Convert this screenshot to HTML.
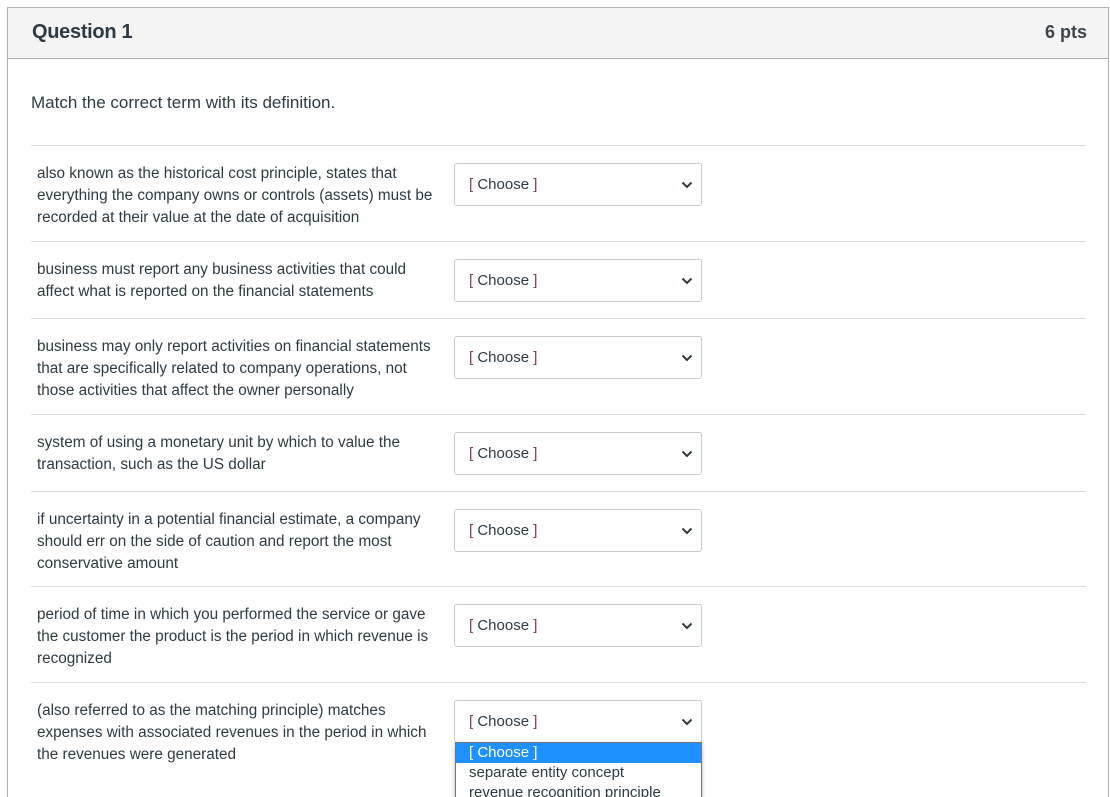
<!DOCTYPE html>
<html style="overflow:hidden;height:797px"><head><style>
body{margin:0;width:1110px;height:797px;overflow:hidden;background:#fff;font-family:"Liberation Sans",sans-serif;color:#2d3b45;position:relative}
.box{position:absolute;left:7px;top:7px;width:1100px;height:820px;border:1px solid #b0b0b0}
.hdr{position:absolute;left:0;top:0;right:0;height:50px;background:#f4f4f4;border-bottom:1px solid #b0b0b0}
.q{position:absolute;left:24px;top:13px;font-size:20px;font-weight:bold;letter-spacing:-0.3px}
.pts{position:absolute;right:21px;top:14px;font-size:18px;font-weight:bold;color:#3d464d}
.ins{position:absolute;left:31px;top:93px;font-size:17px}
.sep{position:absolute;left:31px;width:1055px;height:1px;background:#dcdcdc}
.t{position:absolute;left:37px;font-size:15.3px;line-height:22px;white-space:nowrap;margin-top:1px}
.sel{position:absolute;left:454px;width:248px;height:43px;border:1px solid #c7cdd1;border-radius:3px;background:#fff;box-sizing:border-box}
.sel>.c{position:absolute;left:14px;top:12px;font-size:15px;color:#2d3b45}
.b{color:#7a3a5a}
.sel svg{position:absolute;right:8px;top:17px}
.dd{position:absolute;left:455px;top:742px;width:245px;height:60px;border:1px solid #777;background:#fff;box-shadow:0 2px 4px rgba(0,0,0,.3);font-size:15px;color:#2d3b45}
.dd div{height:20px;line-height:19px;padding-left:13px}
.dd .h{background:#1e90ff;color:#fff}
</style></head><body>
<div class="box"><div class="hdr"><div class="q">Question 1</div><div class="pts">6 pts</div></div></div>
<div class="ins">Match the correct term with its definition.</div>
<div class="sep" style="top:145px"></div>
<div class="sep" style="top:241px"></div>
<div class="sep" style="top:318px"></div>
<div class="sep" style="top:414px"></div>
<div class="sep" style="top:491px"></div>
<div class="sep" style="top:586px"></div>
<div class="sep" style="top:682px"></div>

<div class="t" style="top:162px">also known as the historical cost principle, states that<br>everything the company owns or controls (assets) must be<br>recorded at their value at the date of acquisition</div>
<div class="t" style="top:258px">business must report any business activities that could<br>affect what is reported on the financial statements</div>
<div class="t" style="top:335px">business may only report activities on financial statements<br>that are specifically related to company operations, not<br>those activities that affect the owner personally</div>
<div class="t" style="top:431px">system of using a monetary unit by which to value the<br>transaction, such as the US dollar</div>
<div class="t" style="top:508px">if uncertainty in a potential financial estimate, a company<br>should err on the side of caution and report the most<br>conservative amount</div>
<div class="t" style="top:603px">period of time in which you performed the service or gave<br>the customer the product is the period in which revenue is<br>recognized</div>
<div class="t" style="top:699px">(also referred to as the matching principle) matches<br>expenses with associated revenues in the period in which<br>the revenues were generated</div>

<div class="sel" style="top:163px"><span class="c"><span class="b">[</span> Choose <span class="b">]</span></span><svg width="12" height="8" viewBox="0 0 12 8"><path d="M1.5 1.5L6 6l4.5-4.5" fill="none" stroke="#2d3b45" stroke-width="2"/></svg></div>
<div class="sel" style="top:259px"><span class="c"><span class="b">[</span> Choose <span class="b">]</span></span><svg width="12" height="8" viewBox="0 0 12 8"><path d="M1.5 1.5L6 6l4.5-4.5" fill="none" stroke="#2d3b45" stroke-width="2"/></svg></div>
<div class="sel" style="top:336px"><span class="c"><span class="b">[</span> Choose <span class="b">]</span></span><svg width="12" height="8" viewBox="0 0 12 8"><path d="M1.5 1.5L6 6l4.5-4.5" fill="none" stroke="#2d3b45" stroke-width="2"/></svg></div>
<div class="sel" style="top:432px"><span class="c"><span class="b">[</span> Choose <span class="b">]</span></span><svg width="12" height="8" viewBox="0 0 12 8"><path d="M1.5 1.5L6 6l4.5-4.5" fill="none" stroke="#2d3b45" stroke-width="2"/></svg></div>
<div class="sel" style="top:509px"><span class="c"><span class="b">[</span> Choose <span class="b">]</span></span><svg width="12" height="8" viewBox="0 0 12 8"><path d="M1.5 1.5L6 6l4.5-4.5" fill="none" stroke="#2d3b45" stroke-width="2"/></svg></div>
<div class="sel" style="top:604px"><span class="c"><span class="b">[</span> Choose <span class="b">]</span></span><svg width="12" height="8" viewBox="0 0 12 8"><path d="M1.5 1.5L6 6l4.5-4.5" fill="none" stroke="#2d3b45" stroke-width="2"/></svg></div>
<div class="sel" style="top:700px"><span class="c"><span class="b">[</span> Choose <span class="b">]</span></span><svg width="12" height="8" viewBox="0 0 12 8"><path d="M1.5 1.5L6 6l4.5-4.5" fill="none" stroke="#2d3b45" stroke-width="2"/></svg></div>

<div class="dd"><div class="h">[ Choose ]</div><div>separate entity concept</div><div>revenue recognition principle</div></div>
</body></html>
